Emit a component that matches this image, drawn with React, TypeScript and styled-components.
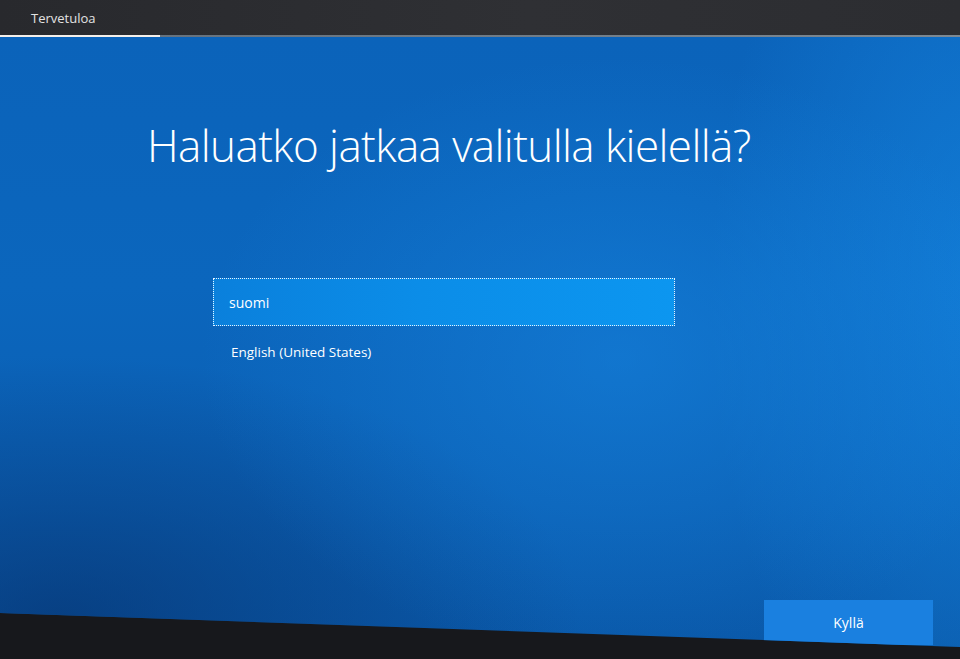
import React from 'react';
import styled, {createGlobalStyle} from "styled-components";

const GlobalStyle = createGlobalStyle`
  html, body {
    margin: 0;
    padding: 0;
    height: 100%;
    background: #17181c;
  }

  #root {
    height: 100%;
  }
`;

const Screen = styled.div`
  height: 100vh;
  display: flex;
  flex-direction: column;
  font-family: "Segoe UI", "Open Sans", "Noto Sans", sans-serif;
  color: white;
  overflow: hidden;
`;

const TitleBar = styled.div`
  height: 35px;
  flex-shrink: 0;
  display: flex;
  align-items: center;
  padding-left: 31px;
  background: linear-gradient(90deg, #28292d 0%, #2f3034 55%, #2c2d31 100%);
  font-size: 13px;
  color: #e2e2e2;
`;

const Progress = styled.div<{ $done: number }>`
  height: 2px;
  flex-shrink: 0;
  background: linear-gradient(90deg,
  #f4efea 0%, #f4efea ${p => p.$done}px,
  #66727e ${p => p.$done}px, #7d8993 100%);
`;

const Panel = styled.main`
  flex: 1;
  display: flex;
  flex-direction: column;
  clip-path: polygon(0 0, 100% 0, 100% calc(100% - 12px), 0 calc(100% - 46px));
  background: radial-gradient(ellipse 420px 300px at 620px 320px, rgba(24, 136, 228, 0.5), transparent 100%),
  radial-gradient(ellipse 280px 520px at 990px 260px, rgba(22, 138, 230, 0.6), transparent 100%),
  radial-gradient(ellipse 520px 260px at 60px 580px, rgba(6, 50, 110, 0.65), transparent 100%),
  linear-gradient(180deg, #0b63ba 0%, #0b66bd 40%, #0b5fb3 75%, #0a58a8 100%);
`;

const Heading = styled.h1`
  margin: 82px 0 0 147px;
  font-size: 44px;
  font-weight: 300;
  letter-spacing: -0.6px;
  line-height: 52px;
`;

const LanguageList = styled.ul`
  list-style: none;
  margin: 107px 0 0 213px;
  padding: 0;
  width: 462px;
  display: flex;
  flex-direction: column;
`;

const LanguageItem = styled.li<{ $selected?: boolean }>`
  height: 48px;
  display: flex;
  align-items: center;
  padding-left: 15px;
  box-sizing: border-box;
  font-size: 14px;
  border: 1px dotted ${p => p.$selected ? "#e8f3ff" : "transparent"};
  background: ${p => p.$selected
          ? "linear-gradient(90deg, #0a80dc 0%, #0b8de8 45%, #0c96f0 100%)"
          : "transparent"};

  & + & {
    height: 52px;
    padding-left: 17px;
    font-size: 13.5px;
  }
`;

const Footer = styled.div`
  margin-top: auto;
  display: flex;
  justify-content: flex-end;
  padding: 0 27px 14px 0;
`;

const PrimaryButton = styled.button`
  width: 169px;
  height: 45px;
  border: none;
  background: #1a80e0;
  color: white;
  font-family: inherit;
  font-size: 14px;
`;

function App(): React.JSX.Element {
  return (
    <>
      <GlobalStyle/>
      <Screen>
        <TitleBar>Tervetuloa</TitleBar>
        <Progress $done={160}/>
        <Panel>
          <Heading>Haluatko jatkaa valitulla kielellä?</Heading>
          <LanguageList>
            <LanguageItem $selected>suomi</LanguageItem>
            <LanguageItem>English (United States)</LanguageItem>
          </LanguageList>
          <Footer>
            <PrimaryButton>Kyllä</PrimaryButton>
          </Footer>
        </Panel>
      </Screen>
    </>
  );
}

export default App;
